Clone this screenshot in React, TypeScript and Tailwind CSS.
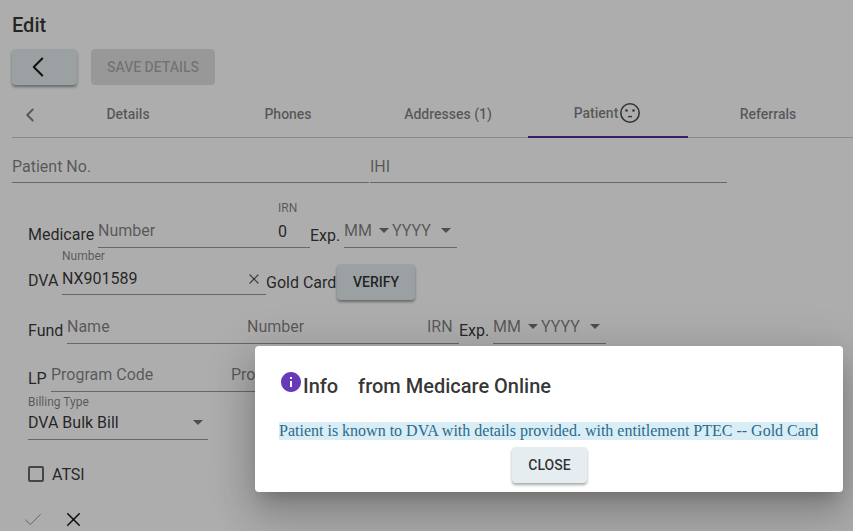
import { Check, ChevronLeft, X } from "lucide-react";

const caret = "h-0 w-0 border-x-[5px] border-t-[5px] border-x-transparent border-t-black/55";

function Label({ children, className = "" }: { children: string; className?: string }) {
  return <span className={`whitespace-nowrap text-[16px] leading-[19px] text-black/80 ${className}`}>{children}</span>;
}

function Placeholder({ children, className = "" }: { children: string; className?: string }) {
  return <span className={`whitespace-nowrap text-[16px] leading-[19px] text-black/50 ${className}`}>{children}</span>;
}

function DateSelect() {
  return (
    <div className="flex h-[33px] items-start border-b border-black/40">
      <div className="flex w-[48px] items-center pt-[6px]">
        <Placeholder>MM</Placeholder>
        <span className={`ml-[7px] ${caret}`} />
      </div>
      <div className="flex w-[65px] items-center pt-[6px]">
        <Placeholder>YYYY</Placeholder>
        <span className={`ml-[10px] ${caret}`} />
      </div>
    </div>
  );
}

function SadFace() {
  return (
    <svg width="24" height="24" viewBox="0 0 24 24" className="text-black/70">
      <circle cx="12" cy="12" r="9.2" fill="none" stroke="currentColor" strokeWidth="1.6" />
      <circle cx="8.5" cy="9.5" r="1.3" fill="currentColor" />
      <circle cx="15.5" cy="9.5" r="1.3" fill="currentColor" />
      <path d="M10 15.6h4" stroke="currentColor" strokeWidth="1.4" fill="none" />
    </svg>
  );
}

export default function App() {
  return (
    <div className="relative h-[531px] w-[853px] overflow-hidden bg-white font-[Roboto,sans-serif]">
      <div className="pl-3 pt-[14px]">
        <h1 className="h-[35px] text-[20px] font-medium leading-[23px] text-black/80">Edit</h1>

        <div className="flex gap-[14px]">
          <button className="flex h-9 w-[65px] items-center justify-center rounded bg-[#e5edf0] pr-[13px] shadow-[0_2px_3px_rgba(0,0,0,0.4)]">
            <ChevronLeft size={34} strokeWidth={1.4} className="text-black/90" />
          </button>
          <button className="h-9 w-[124px] rounded bg-black/12 text-[14px] font-medium text-black/26">
            SAVE DETAILS
          </button>
        </div>

        <div className="mt-[10px] flex h-[43px] border-b border-black/20">
          <div className="flex w-9 items-center justify-center pb-[2px]">
            <ChevronLeft size={22} strokeWidth={2} className="text-black/50" />
          </div>
          {["Details", "Phones", "Addresses (1)"].map((tab) => (
            <div key={tab} className="flex w-40 items-center justify-center pb-[3px] text-[14px] font-medium text-black/50">
              {tab}
            </div>
          ))}
          <div className="flex h-[43px] w-40 items-center justify-center border-b-2 border-[#5a2ca0] pb-[5px] text-[14px] font-medium text-black/50">
            Patient
            <SadFace />
          </div>
          <div className="flex w-40 items-center justify-center pb-[3px] text-[14px] font-medium text-black/50">
            Referrals
          </div>
        </div>

        <div className="mt-[12px] flex h-[33px] gap-px">
          <div className="w-[357px] border-b border-black/40 pt-[5px]">
            <Placeholder>Patient No.</Placeholder>
          </div>
          <div className="w-[357px] border-b border-black/40 pt-[5px]">
            <Placeholder>IHI</Placeholder>
          </div>
        </div>

        <div className="pl-4">
          <div className="mt-[18px] flex h-[47px] items-end">
            <Label className="mb-[4px] w-[70px]">Medicare</Label>
            <div className="h-[33px] w-[180px] border-b border-black/40 pt-[4px]">
              <Placeholder>Number</Placeholder>
            </div>
            <div className="h-[47px] w-[32px] border-b border-black/40">
              <div className="h-[19px] text-[12px] leading-[14px] text-black/50">IRN</div>
              <Label>0</Label>
            </div>
            <Label className="mb-[3px] w-[34px]">Exp.</Label>
            <DateSelect />
          </div>

          <div className="flex h-[53px] items-start">
            <Label className="mt-[23px] w-[34px]">DVA</Label>
            <div className="flex h-[47px] w-[204px] flex-col border-b border-black/40">
              <div className="pt-[1px] text-[12px] leading-[14px] text-black/50">Number</div>
              <div className="flex items-center justify-between pr-[4px] pt-[6px]">
                <Label>NX901589</Label>
                <X size={16} strokeWidth={1.8} className="text-black/65" />
              </div>
            </div>
            <Label className="mt-[25px] w-[71px]">Gold Card</Label>
            <button className="mt-[16px] h-9 w-[78px] rounded bg-[#e5edf0] text-[14px] font-medium text-black/80 shadow-[0_2px_3px_rgba(0,0,0,0.4)]">
              VERIFY
            </button>
          </div>

          <div className="mt-[10px] flex h-[33px] items-end">
            <Label className="mb-[4px] w-[39px]">Fund</Label>
            <div className="flex h-[33px] w-[392px] border-b border-black/40 pt-[6px]">
              <Placeholder className="w-[180px]">Name</Placeholder>
              <Placeholder className="w-[180px]">Number</Placeholder>
              <Placeholder>IRN</Placeholder>
            </div>
            <Label className="mb-[4px] w-[34px]">Exp.</Label>
            <DateSelect />
          </div>

          <div className="mt-[15px] flex h-[33px] items-end">
            <Label className="mb-[4px] w-[23px]">LP</Label>
            <div className="flex h-[33px] w-[360px] border-b border-black/40 pt-[6px]">
              <Placeholder className="w-[180px]">Program Code</Placeholder>
              <Placeholder>Program Name</Placeholder>
            </div>
          </div>

          <div className="mt-[3px] h-[45px] w-[180px] border-b border-black/40">
            <div className="text-[12px] leading-[14px] text-black/50">Billing Type</div>
            <div className="flex items-center justify-between pr-[5px] pt-[4px]">
              <Label>DVA Bulk Bill</Label>
              <span className={caret} />
            </div>
          </div>

          <label className="mt-[25px] flex h-[18px] items-center gap-2">
            <span className="h-4 w-4 rounded-[2px] border-2 border-black/60" />
            <Label>ATSI</Label>
          </label>

          <div className="mt-[25px] flex items-center gap-[18px]">
            <Check size={22} strokeWidth={1} className="-ml-[6px] text-black/45" />
            <X size={23} strokeWidth={1.6} className="text-black/90" />
          </div>
        </div>
      </div>

      <div className="absolute inset-0 bg-black/32">
        <div className="absolute left-[255px] top-[346px] h-[146px] w-[588px] rounded bg-white pl-[24px] pt-[25px] shadow-[0_11px_15px_-7px_rgba(0,0,0,0.2),0_24px_38px_3px_rgba(0,0,0,0.14),0_9px_46px_8px_rgba(0,0,0,0.12)]">
          <div className="flex h-[30px] items-start text-[20px] font-medium leading-[30px] text-black/80">
            <svg width="24" height="24" viewBox="0 0 24 24" className="-mt-[1px] fill-[#673ab7]">
              <path d="M12 2C6.48 2 2 6.48 2 12s4.48 10 10 10 10-4.48 10-10S17.52 2 12 2zm1 15h-2v-6h2v6zm0-8h-2V7h2v2z" />
            </svg>
            <span className="whitespace-pre">Info    from Medicare Online</span>
          </div>
          <div className="mt-[21px] flex">
            <span className="whitespace-nowrap bg-[#d9edf7] font-['Liberation_Serif',serif] text-[16px] leading-[18px] text-[#2c6a8a]">
              Patient is known to DVA with details provided. with entitlement PTEC -- Gold Card
            </span>
          </div>
          <button className="ml-[233px] mt-[7px] h-9 w-[75px] rounded bg-[#e5edf0] text-[14px] font-medium text-black/80 shadow-[0_2px_3px_rgba(0,0,0,0.35)]">
            CLOSE
          </button>
        </div>
      </div>
    </div>
  );
}
